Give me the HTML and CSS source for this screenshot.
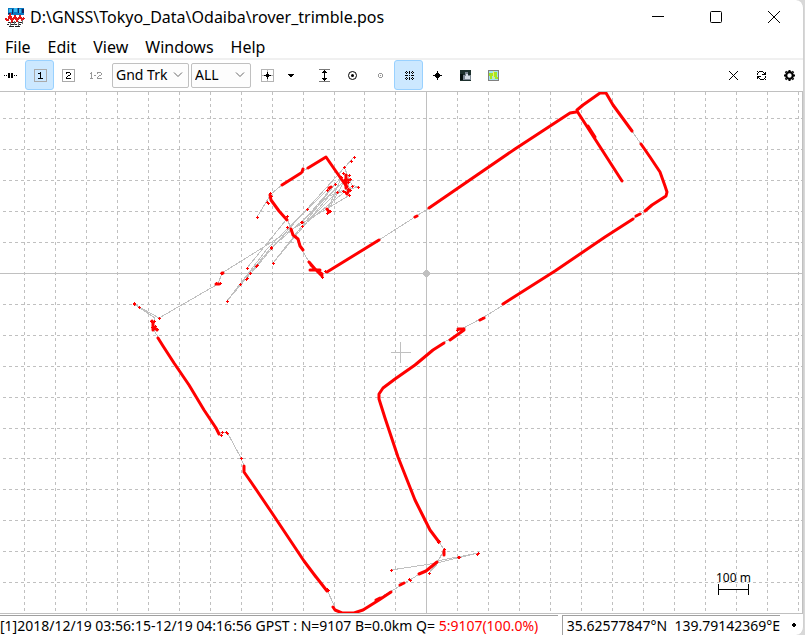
FILE: index.html
```html
<!DOCTYPE html>
<html lang="en">
<head>
<meta charset="utf-8">
<title>D:\GNSS\Tokyo_Data\Odaiba\rover_trimble.pos</title>
<link rel="stylesheet" href="styles.css">
</head>
<body>
<div class="window">
  <header class="titlebar">
    <svg class="logo" width="20" height="20" viewBox="0 0 20 20" shape-rendering="crispEdges">
      <path fill="#0878c0" d="M3 1h16v7H3z"/><path fill="#38b8f0" d="M4 2h3v3H4zM9 1h3v4H9zM14 2h2v4h-2z"/>
      <path fill="#14245c" d="M7 2h1v5H7zM13 1h1v5h-1zM17 2h2v4h-2zM3 6h3v1H3z"/>
      <path fill="#fff" d="M2 8h4v1H2zM9 8h2v1H9zM1 9h17v10H1z"/>
      <path stroke="#e01818" stroke-width="2" fill="none" d="M0 12l3 1 2-5 2 6 3-5 2 5 3-5 2 4 2-2"/>
      <path stroke="#222" fill="none" d="M3 15.500h3m1 0h4m2 0h5M2 17.500h2m2 0h3m1 0h2m1 0h3M4 19.500h5m1 0h5"/>
      <path fill="#707070" d="M5 15h1v4H5zM9 14h1v4H9zM13 14h1v5h-1zM17 13h1v4h-1z"/>
    </svg>
    <h1>D:\GNSS\Tokyo_Data\Odaiba\rover_trimble.pos</h1>
    <div class="captions">
      <button aria-label="Minimize"><svg width="14" height="14"><path d="M1 6.500h12"/></svg></button>
      <button aria-label="Maximize"><svg width="14" height="14"><rect x="1.500" y="1.500" width="11" height="11" rx="1"/></svg></button>
      <button aria-label="Close"><svg width="14" height="14"><path d="M1 1l12 12M13 1L1 13"/></svg></button>
    </div>
  </header>
  <nav class="menu">
    <button>File</button><button>Edit</button><button>View</button><button>Windows</button><button>Help</button>
  </nav>
  <div class="toolbar">
    <button class="tool tool-first" aria-label="Connect"><svg width="14" height="14" shape-rendering="crispEdges"><path d="M4 5h2v5H4zM7 5h2v5H7zM0 7h1v1H0zM2 7h1v1H2zM10 7h1v1h-1zM12 7h1v1h-1z"/></svg></button>
    <button class="tool on" aria-label="Solution 1"><svg width="14" height="14" shape-rendering="crispEdges"><rect class="frame" x="1.500" y="1.500" width="12" height="12"/><path d="M7 4h1v6h2v1H5v-1h2V6H5V5h2z"/></svg></button>
    <button class="tool" aria-label="Solution 2"><svg width="14" height="14" shape-rendering="crispEdges"><rect class="frame white" x="1.500" y="1.500" width="12" height="12"/><path d="M5 4h4v1h1v2H9v1H7v1H6v1h4v1H5V9h1V8h1V7h2V5H6v1H5z"/></svg></button>
    <button class="tool" aria-label="Solution 1-2"><svg class="dim" width="14" height="14" shape-rendering="crispEdges"><path d="M2 4h1v6h1v1H1v-1h1V6H1V5h1zM5 7h2v1H5zM8 4h4v1h1v2h-1v1h-2v1H9v1h4v1H8V9h1V8h1V7h2V5H9v1H8z"/></svg></button>
    <select class="plot" aria-label="Plot type"><option>Gnd Trk</option></select>
    <select class="quality" aria-label="Quality"><option>ALL</option></select>
    <button class="tool center" aria-label="Center"><svg width="14" height="14" shape-rendering="crispEdges"><path fill="#b4b4b4" d="M1 1h13v13H1zM2 2v5h5V2zM8 2v5h5V2zM2 8v5h5V8zM8 8v5h5V8z" fill-rule="evenodd"/><path d="M4 7h2V6h1V4h1v2h1v1h2v1H9v1H8v2H7V9H6V8H4z"/></svg></button>
    <button class="tool narrow" aria-label="More"><svg width="14" height="14" shape-rendering="crispEdges"><path d="M4 6h6v1H9v1H8v1H6V8H5V7H4z"/></svg></button>
    <button class="tool fit" aria-label="Fit vertical"><svg width="14" height="14" shape-rendering="crispEdges"><path fill="#777" d="M2 1h11v1H2zM2 13h11v1H2z"/><path d="M7 2h1v1h1v1h1v1H8v5h2v1H9v1H8v1H7v-1H6v-1H5v-1h2V5H5V4h1V3h1z"/></svg></button>
    <button class="tool" aria-label="Show track points"><svg width="14" height="14"><circle cx="7.500" cy="7.500" r="4" fill="none" stroke="#000"/><circle cx="7.500" cy="7.500" r="1.500"/></svg></button>
    <button class="tool" aria-label="Fix center"><svg width="14" height="14" shape-rendering="crispEdges"><path fill="#999" fill-rule="evenodd" d="M6 5h3v1h1v3H9v1H6V9H5V6h1zM6 6v3h3V6zM7 7h1v1H7z"/></svg></button>
    <button class="tool on" aria-label="Show grid"><svg width="14" height="14" shape-rendering="crispEdges"><path stroke="#000" stroke-dasharray="1 1" d="M3 4.500h9M3 7.500h9M3 10.500h9M4.500 3v9M7.500 3v9M10.500 3v9"/></svg></button>
    <button class="tool" aria-label="Show waypoint"><svg width="14" height="14" shape-rendering="crispEdges"><path d="M7 3h1v2h1v1h1v1h2v1h-2v1H9v1H8v2H7v-2H6V9H5V8H3V7h2V6h1V5h1z"/><path d="M6 5h3v5H6zM5 6h5v3H5z"/></svg></button>
    <button class="tool" aria-label="Show image"><svg width="14" height="14" shape-rendering="crispEdges"><path fill="#1d302d" d="M2 2h11v11H2z"/><path fill="#07110f" d="M2 6h3v6H2z"/><path fill="#7b8792" d="M5 7h8v5H5zM7 4h3v3H7z"/><path fill="#d4dce5" d="M7 8h5v3H7zM8 6h2v2H8z"/></svg></button>
    <button class="tool" aria-label="Show map"><svg width="14" height="14" shape-rendering="crispEdges"><path fill="#808080" d="M2 2h11v11H2z"/><path fill="#9ee4ef" d="M3 3h9v9H3z"/><path fill="#a6e622" d="M3 5h4v3H3zM4 8h2v3H4zM8 4h3v5H8zM9 9h3v2H9z"/><path fill="#f5f06b" d="M7 3h1v8H7z"/></svg></button>
    <span class="spacer"></span>
    <button class="tool" aria-label="Clear"><svg width="14" height="14"><path fill="none" stroke="#000" d="M3 3l9 9M12 3l-9 9"/></svg></button>
    <button class="tool" aria-label="Reload"><svg width="14" height="14" shape-rendering="crispEdges"><path d="M3 3h1v1H3zM5 3h4v1H5zM4 4h1v1H4zM3 5h1v2H3zM9 4h1v1H9zM12 3v4H8V6h2V5h1V4h1zM3 8h4v1H5v1H4v1H3zM11 8h1v2h-1zM10 10h1v1h-1zM6 11h4v1H6zM5 10h1v1H5zM11 11h1v1h-1z"/></svg></button>
    <button class="tool" aria-label="Options"><svg width="14" height="14"><circle cx="7.500" cy="7.500" r="3.300" fill="none" stroke="#000" stroke-width="2.200"/><path stroke="#000" stroke-width="2" d="M7.500 2v2M7.500 11v2M2 7.500h2M11 7.500h2M3.500 3.500l1 1M10.500 10.500l1 1M11.500 3.500l-1 1M4.500 10.500l-1 1"/></svg></button>
  </div>
  <main class="map">
    <svg viewBox="0 92 802 521" preserveAspectRatio="xMidYMid slice" shape-rendering="crispEdges" role="img" aria-label="Ground track">
      <defs>
        <marker id="fix" markerUnits="userSpaceOnUse" markerWidth="3" markerHeight="3" refX="1" refY="1" viewBox="0 0 3 3"><path fill="#f00" d="M1 0h1v1h1v1H2v1H1V2H0V1h1z"/></marker>
      </defs>
      <path class="grid" d="M24.500 92v521M55.500 92v521M86.500 92v521M117.500 92v521M148.500 92v521M179.500 92v521M210.500 92v521M241.500 92v521M272.500 92v521M303.500 92v521M334.500 92v521M364.500 92v521M395.500 92v521M457.500 92v521M488.500 92v521M519.500 92v521M550.500 92v521M581.500 92v521M612.500 92v521M643.500 92v521M674.500 92v521M705.500 92v521M736.500 92v521M767.500 92v521M798.500 92v521"/>
      <path class="grid" d="M3 118.500h799M3 149.500h799M3 180.500h799M3 211.500h799M3 242.500h799M3 304.500h799M3 335.500h799M3 366.500h799M3 397.500h799M3 428.500h799M3 458.500h799M3 489.500h799M3 520.500h799M3 551.500h799M3 582.500h799"/>
      <path class="axis" d="M0 273.500h802M426.500 92v521M391 352.500h20M400.500 342v21"/>
      <path fill="#c0c0c0" d="M425 270h3v1h1v1h1v3h-1v1h-1v1h-3v-1h-1v-1h-1v-3h1v-1h1z"/>
      <g class="trace">
        <path d="M632 131L641 144M647 210L633 219M505 304L484 317L458 331M450 339L444 342M429 208L379 240M439 541L444 550L437 563M437 563L410 580L376 600M335 607L327 590M244 466L241 458L227 432H220M158 337L152 327L155 318L134 304L159 318L218 284L222 273L291 230L350 195M291 229L287 218M309 262L302 250M301 173L308 168M282 185L271 194L257 217"/>
        <path d="M354 157L307 209L287 231L227 301L267 249L327 190M227 301L240 284L271 248L301 222L345 180M273 263L302 226L341 177M273 263L329 196L349 190M247 268L286 220M301 227L352 186M304 225L337 192L358 187L352 185L344 167M335 184L300 225M328 210L345 180M344 173L349 187M327 211L340 181"/>
        <path d="M391 570L437 563L478 553L437 561L430 572L439 562"/>
      </g>
      <g class="track">
        <path d="M622 181L577 111M588 126L595 137M577 110L583 105L600 93H606L613 105L632 131M641 144L650 157L660 172L665 186L667 192L666 196L652 205L645 211M640 214L636 216M633 219L605 237L555 271L503 304M576 112L570 113L515 149L429 208M417 216L415 217M379 240L353 256L327 272M303 169L302 172M301 173L282 185M308 168L326 157L335 170L347 187M270 195L271 200L279 211L287 220M291 229L293 235L298 239L300 246L303 250M309 262L315 269L322 274M310 270H320M311 265L322 276M484 318L480 320M464 329H458M464 330L450 340M444 343L433 350L415 365L395 379L383 388L379 394V399L385 418L398 457L415 500L422 514L430 530L439 542M444 551V555M437 562L426 571L419 574M404 583L400 585M391 592L379 600L363 610L354 613H342L335 610L333 607M327 591L313 573M316 577L304 561L288 537L270 510L251 482L244 472V466M158 338L163 346L174 363L189 385L204 410L216 428L219 434M152 321L153 323V330M155 328L157 330"/>
        <path d="M216 284H219M222 273H223M349 190L347 194M345 180H349M346 175V188M327 209L329 212M329 188L331 187M376 600L380 598"/>
      </g>
      <path class="points" d="M354 157L351 161L344 167L343 173L341 177L335 184L327 190L329 188L337 192L343 191L345 192L352 186L358 187L349 195L307 209L257 217L267 202L268 203L270 193L271 196L273 263L301 222L302 222L302 226L271 247L271 248L257 265L256 266L250 273L247 278L246 279L240 284L227 301L247 268L216 283L220 283L221 273L222 273L159 318L139 307L134 303L134 304L151 321L154 321L152 327L155 326L157 329L227 433L226 432L222 432L221 435L241 458L327 589L328 590L391 570L410 580L409 579L429 573L459 557L458 557L478 553L477 554L458 329L457 330L482 318L439 541L438 542L444 549L322 277L325 271L328 210L327 213L330 211L350 179L349 175L348 182L350 190L348 189L287 216L287 227"/>
      <path class="scale" d="M718.500 584v11M718.500 589.500h30M748.500 584v11"/>
      <text x="716" y="582">100 m</text>
    </svg>
  </main>
  <footer class="status">
    <div class="summary">[1]2018/12/19 03:56:15-12/19 04:16:56 GPST : N=9107 B=0.0km Q= <span class="q5">5:9107(100.0%)</span></div>
    <div class="position">35.62577847°N&nbsp; 139.79142369°E</div>
    <svg class="grip" width="8" height="8" shape-rendering="crispEdges"><path d="M3 2h2v1h1v2H5v1H3V5H2V3h1z"/></svg>
  </footer>
</div>
</body>
</html>
```
FILE: styles.css
```css
* { box-sizing: border-box; }
body { margin: 0; background: #d8d8d8; color: #000; font: 14px "Noto Sans", sans-serif; }
button { border: 0; padding: 0; background: none; color: inherit; font: inherit; }
svg { display: block; }

.window {
  display: flex;
  flex-direction: column;
  height: 100vh;
  margin-right: 1px;
  background: #fff;
  border-right: 1px solid #d0d0d0;
  border-radius: 0 8px 8px 0;
  overflow: hidden;
}

.titlebar { display: flex; align-items: center; height: 34px; padding-left: 5px; }
.titlebar h1 { flex: 1; margin: 0 0 0 5px; font: 16px "Noto Sans", sans-serif; white-space: nowrap; }
.captions { display: flex; }
.captions button { display: grid; place-items: center; width: 58px; height: 32px; }
.captions svg { fill: none; stroke: #000; }

.menu { display: flex; gap: 17px; height: 24px; padding: 2px 0 0 5px; font-size: 16px; align-items: center; }

.toolbar { display: flex; align-items: center; height: 33px; padding-bottom: 1px; border-top: 2px solid #f0f0f0; }
.tool { display: grid; place-items: center; flex: none; width: 28px; height: 30px; border: 1px solid transparent; border-radius: 3px; }
.tool svg { overflow: visible; }
.tool-first { width: 25px; padding-right: 4px; }
.on { width: 29px; background: #cce8ff; border-color: #99d1ff; }
.narrow { width: 20px; }
.fit { margin-left: 9px; }
.frame { fill: none; stroke: #aaa; }
.white { fill: #fff; }
.dim { fill: #999; }
.spacer { flex: 1; }

select {
  flex: none;
  height: 25px;
  margin: 0 0 0 2px;
  padding: 0 0 1px 3px;
  border: 1px solid #c0c0c0;
  border-radius: 2px;
  appearance: none;
  color: #000;
  font: 14px "Noto Sans", sans-serif;
  background: #fdfdfd url("data:image/svg+xml,%3Csvg xmlns='http://www.w3.org/2000/svg' width='10' height='6'%3E%3Cpath d='M1 .5l4 4 4-4' fill='none' stroke='%23666'/%3E%3C/svg%3E") no-repeat right 5px center;
}
.plot { width: 77px; }
.quality { width: 60px; }
.center { margin-left: 2px; }

.map { flex: 1; min-height: 0; border: solid #c0c0c0; border-width: 1px 1px 1px 0; }
.map svg { width: 100%; height: 100%; }
.grid { stroke: #c0c0c0; stroke-dasharray: 3 3; }
.axis { fill: none; stroke: #c0c0c0; }
.trace { fill: none; stroke: #c0c0c0; }
.track { fill: none; stroke: #f00; stroke-width: 3; stroke-linecap: round; stroke-linejoin: round; shape-rendering: auto; }
.points { fill: none; marker: url(#fix); }
.scale { stroke: #000; fill: none; }
.map text { font: 12px "Noto Sans", sans-serif; }

.status { display: flex; gap: 4px; height: 20px; margin-top: 1px; font-size: 14px; line-height: 19px; white-space: nowrap; }
.summary { flex: 1; overflow: hidden; border-top: 1px solid #a0a0a0; }
.position { padding-left: 4px; border: solid #a0a0a0; border-width: 1px 0 0 1px; }
.q5 { color: #f00; }
.grip { align-self: center; margin: 0 5px 0 6px; }
```
